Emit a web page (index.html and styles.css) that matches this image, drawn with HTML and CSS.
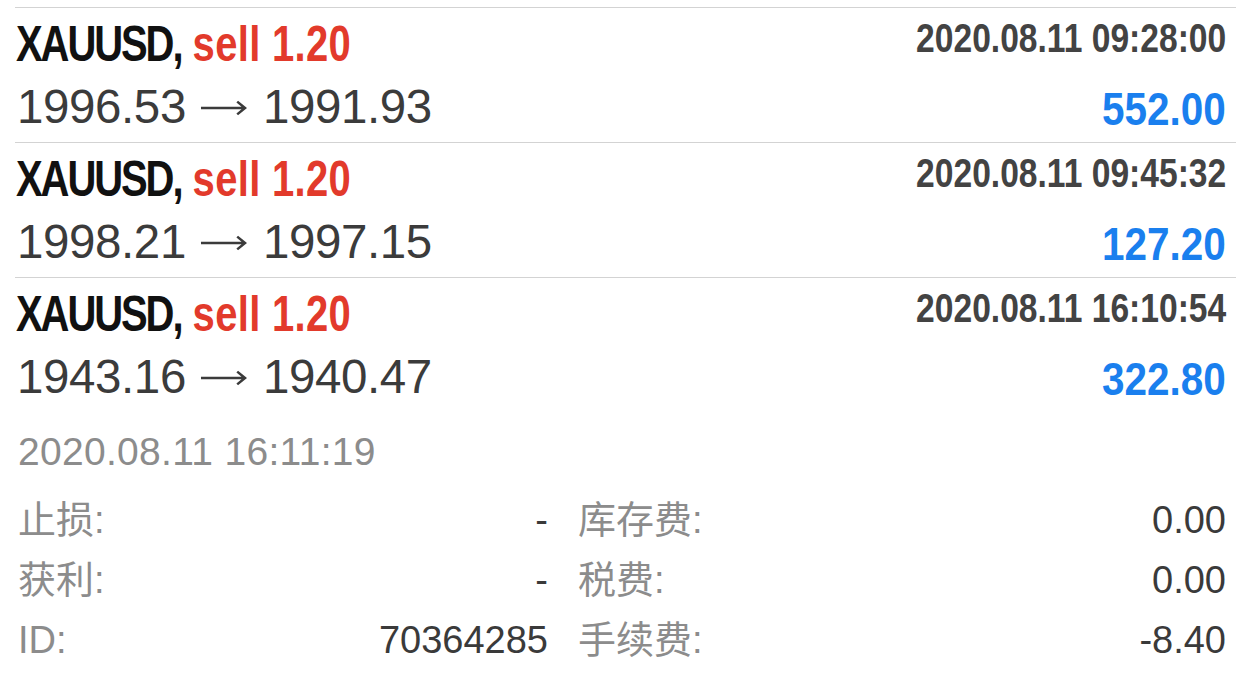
FILE: index.html
```html
<!DOCTYPE html>
<html lang="zh-CN">
<head>
    <meta charset="UTF-8">
    <meta name="viewport" content="width=device-width, initial-scale=1.0">
    <title>交易历史</title>
    <link rel="stylesheet" href="styles.css">
</head>
<body>
    <div class="historico">
        <div class="trade">
            <div class="linha-topo">
                <span class="titulo"><span class="par">XAUUSD,</span> <span class="venda">sell 1.20</span></span>
                <span class="hora">2020.08.11 09:28:00</span>
            </div>
            <div class="linha-preco">
                <span class="preco">1996.53<svg class="seta" viewBox="0 0 48 16"><path d="M1 8H46M38 1.5L46 8L38 14.5"/></svg>1991.93</span>
                <span class="lucro">552.00</span>
            </div>
        </div>
        <div class="trade">
            <div class="linha-topo">
                <span class="titulo"><span class="par">XAUUSD,</span> <span class="venda">sell 1.20</span></span>
                <span class="hora">2020.08.11 09:45:32</span>
            </div>
            <div class="linha-preco">
                <span class="preco">1998.21<svg class="seta" viewBox="0 0 48 16"><path d="M1 8H46M38 1.5L46 8L38 14.5"/></svg>1997.15</span>
                <span class="lucro">127.20</span>
            </div>
        </div>
        <div class="trade">
            <div class="linha-topo">
                <span class="titulo"><span class="par">XAUUSD,</span> <span class="venda">sell 1.20</span></span>
                <span class="hora">2020.08.11 16:10:54</span>
            </div>
            <div class="linha-preco">
                <span class="preco">1943.16<svg class="seta" viewBox="0 0 48 16"><path d="M1 8H46M38 1.5L46 8L38 14.5"/></svg>1940.47</span>
                <span class="lucro">322.80</span>
            </div>
        </div>

        <div class="detalhes">
            <div class="fechamento">2020.08.11 16:11:19</div>
            <div class="grade">
                <div class="campo"><span class="rotulo">止损:</span><span class="valor">-</span></div>
                <div class="campo"><span class="rotulo">库存费:</span><span class="valor">0.00</span></div>
                <div class="campo"><span class="rotulo">获利:</span><span class="valor">-</span></div>
                <div class="campo"><span class="rotulo">税费:</span><span class="valor">0.00</span></div>
                <div class="campo"><span class="rotulo">ID:</span><span class="valor">70364285</span></div>
                <div class="campo"><span class="rotulo">手续费:</span><span class="valor">-8.40</span></div>
            </div>
        </div>
    </div>
</body>
</html>
```

FILE: styles.css
```css
:root {
    --cor-texto: #111111;
    --cor-venda: #e23a2b;
    --cor-lucro: #1a7fee;
    --cor-cinza: #8c8c8c;
    --cor-linha: #d3d3d3;
}
body {
    margin: 0;
    background: white;
    font-family: 'Liberation Sans', 'Noto Sans CJK SC', sans-serif;
    color: var(--cor-texto);
}
.historico {
    padding: 7px 0 0 15px;
}
.trade {
    height: 135px;
    box-sizing: border-box;
    border-top: 1px solid var(--cor-linha);
    padding: 6px 10px 0 1px;
}
.linha-topo {
    display: flex;
    justify-content: space-between;
    align-items: flex-start;
    height: 60px;
}
/* fonte condensada: não há Helvetica Condensed, então comprimimos */
.titulo {
    display: inline-block;
    font-weight: 700;
    font-size: 50px;
    line-height: 60px;
    transform: scaleX(0.8);
    transform-origin: left center;
}
.par {
    letter-spacing: -2.6px;
}
.venda {
    color: var(--cor-venda);
    letter-spacing: 0.4px;
}
.hora {
    display: inline-block;
    font-weight: 700;
    font-size: 40px;
    line-height: 48px;
    color: #434343;
    transform: scaleX(0.84);
    transform-origin: right center;
}
.linha-preco {
    display: flex;
    justify-content: space-between;
    align-items: flex-end;
    height: 65px;
}
.preco {
    display: flex;
    align-items: center;
    font-size: 47.5px;
    line-height: 65px;
    color: #3b3b3b;
    padding-left: 1px;
    letter-spacing: -0.4px;
}
.seta {
    width: 47px;
    height: 16px;
    margin: 3px 16px 0 14px;
    fill: none;
    stroke: #3b3b3b;
    stroke-width: 2.6;
}
.lucro {
    display: inline-block;
    font-weight: 700;
    font-size: 46px;
    line-height: 59px;
    color: var(--cor-lucro);
    transform: scaleX(0.88);
    transform-origin: right center;
}
.detalhes {
    padding: 15px 10px 0 3px;
}
.fechamento {
    font-size: 39px;
    line-height: 50px;
    letter-spacing: 0.3px;
    color: var(--cor-cinza);
}
.grade {
    display: grid;
    grid-template-columns: 530px 1fr;
    column-gap: 30px;
    margin-top: 13px;
}
.campo {
    display: flex;
    justify-content: space-between;
    font-size: 38px;
    line-height: 60px;
}
.rotulo {
    color: var(--cor-cinza);
}
.valor {
    color: #3a3a3a;
}
```
